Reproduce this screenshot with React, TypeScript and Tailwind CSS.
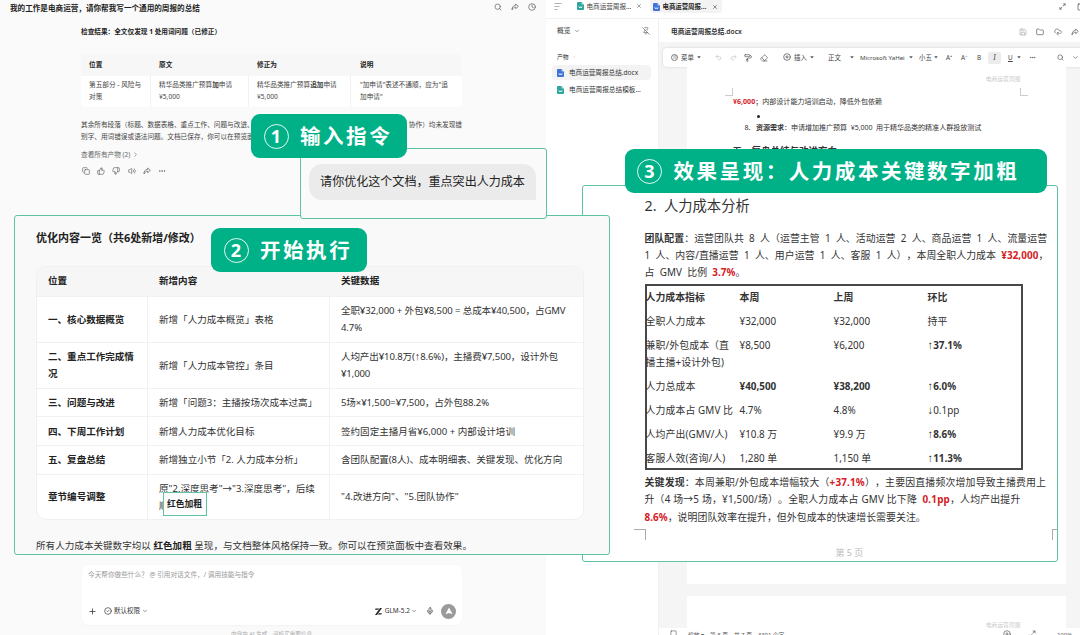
import type { ReactNode } from "react";
import {
  ChevronDown,
  ChevronRight,
  CircleCheck,
  CirclePlus,
  Clock,
  CloudUpload,
  Copy,
  Ellipsis,
  Eraser,
  Folder,
  Maximize2,
  Menu,
  Mic,
  PaintRoller,
  PinOff,
  Plus,
  Redo2,
  Save,
  Search,
  Square,
  ThumbsDown,
  ThumbsUp,
  Undo2,
  Volume2,
  X,
} from "lucide-react";

interface SummaryRow {
  height: string;
  position: string[];
  content: string[];
  data: string[];
  tight?: boolean;
}

const summaryRows: SummaryRow[] = [
  {
    height: "h-[45.5px]",
    position: ["一、核心数据概览"],
    content: ["新增「人力成本概览」表格"],
    data: ["全职¥32,000 + 外包¥8,500 = 总成本¥40,500，占GMV", "4.7%"],
    tight: true,
  },
  {
    height: "h-[46px]",
    position: ["二、重点工作完成情", "况"],
    content: ["新增「人力成本管控」条目"],
    data: ["人均产出¥10.8万(↑8.6%)，主播费¥7,500，设计外包", "¥1,000"],
    tight: true,
  },
  {
    height: "h-[28.5px]",
    position: ["三、问题与改进"],
    content: ["新增「问题3：主播按场次成本过高」"],
    data: ["5场×¥1,500=¥7,500，占外包88.2%"],
    tight: true,
  },
  {
    height: "h-[29px]",
    position: ["四、下周工作计划"],
    content: ["新增人力成本优化目标"],
    data: ["签约固定主播月省¥6,000 + 内部设计培训"],
  },
  {
    height: "h-[28.5px]",
    position: ["五、复盘总结"],
    content: ["新增独立小节「2. 人力成本分析」"],
    data: ["含团队配置(8人)、成本明细表、关键发现、优化方向"],
  },
  {
    height: "h-[45.5px]",
    position: ["章节编号调整"],
    content: ['原"2.深度思考"→"3.深度思考"，后续', "顺延"],
    data: ['"4.改进方向"、"5.团队协作"'],
  },
];

interface CostRow {
  cells: [string, string, string, string];
  second?: string;
  bold?: boolean;
}

const costRows: CostRow[] = [
  { cells: ["全职人力成本", "¥32,000", "¥32,000", "持平"] },
  { cells: ["兼职/外包成本（直", "¥8,500", "¥6,200", "↑37.1%"], second: "播主播+设计外包)" },
  { cells: ["人力总成本", "¥40,500", "¥38,200", "↑6.0%"], bold: true },
  { cells: ["人力成本占 GMV 比", "4.7%", "4.8%", "↓0.1pp"] },
  { cells: ["人均产出(GMV/人)", "¥10.8 万", "¥9.9 万", "↑8.6%"] },
  { cells: ["客服人效(咨询/人)", "1,280 单", "1,150 单", "↑11.3%"] },
];

// Arrows come from a narrower face than the rest of the text
function withArrows(text: string) {
  return text.split(/([↑↓])/).map((part, i) =>
    part === "↑" || part === "↓" ? (
      <span key={i} className="font-['Liberation_Sans',sans-serif] text-[1.15em] leading-none font-bold">
        {part}
      </span>
    ) : (
      part
    ),
  );
}

function Red({ children }: { children: ReactNode }) {
  return <b className="font-bold text-[#d3201f]">{children}</b>;
}

function StepLabel({ num, text, className }: { num: string; text: string; className: string }) {
  return (
    <div className={`absolute flex h-[44px] items-center rounded-[9px] bg-[#00b188] pl-[12.5px] text-white ${className}`}>
      <span className="flex size-[25px] items-center justify-center rounded-full border border-white/90 text-[18px] leading-none font-bold">
        {num}
      </span>
      <span className="ml-[11.5px] text-[20.5px] leading-none font-bold tracking-[2.55px]">{text}</span>
    </div>
  );
}

function FileIcon({ color }: { color: string }) {
  return (
    <svg width="7" height="8" viewBox="0 0 14 16" className="shrink-0">
      <path d="M2 0h7l5 5v9a2 2 0 0 1-2 2H2a2 2 0 0 1-2-2V2a2 2 0 0 1 2-2z" fill={color} />
      <path d="M9 0l5 5h-5z" fill="#fff" opacity="0.6" />
      <path d="M3.5 8.5l2 3.5 1.5-2.5L8.5 12l2-3.5" fill="none" stroke="#fff" strokeWidth="1.5" />
    </svg>
  );
}

function ShareIcon() {
  return (
    <svg width="8" height="8" viewBox="0 0 24 24" fill="none" stroke="currentColor" strokeWidth="2" strokeLinejoin="round">
      <path d="M14 3l8 7-8 7v-4.500c-5 0-8 2.500-11 8.500 0-8 3-13.500 11-14z" />
    </svg>
  );
}

function Caret() {
  return (
    <svg width="4" height="3" viewBox="0 0 8 6" className="shrink-0">
      <path d="M0.5 0.5h7L4 5z" fill="#555" />
    </svg>
  );
}

function ChatPane() {
  return (
    <div className="flex w-[546px] shrink-0 flex-col bg-[#fafafa]">
      <div className="flex h-[16px] shrink-0 items-center justify-between pr-[10px] pl-[10px]">
        <span className="pt-[1px] text-[7.6px] font-bold text-[#222]">我的工作是电商运营，请你帮我写一个通用的周报的总结</span>
        <div className="flex gap-[9px] pb-[2px] text-[#555]">
          <Search size={8} strokeWidth={2} />
          <ShareIcon />
          <Clock size={8} strokeWidth={2} />
        </div>
      </div>

      <div className="ml-[81px] flex w-[381px] flex-col text-[6.65px] text-[#444]">
        <div className="mt-[10px] h-[12px] leading-[12px] font-bold text-[#222]">检查结果：全文仅发现 1 处用词问题（已修正）</div>
        <div className="mt-[16px] grid h-[22px] grid-cols-[69px_98px_102px_110px] items-center rounded-t-[4px] bg-[#f7f7f7] font-bold text-[#222]">
          <span className="pl-[8px]">位置</span>
          <span className="pl-[9px]">原文</span>
          <span className="pl-[9px]">修正为</span>
          <span className="pl-[10px]">说明</span>
        </div>
        <div className="grid h-[31px] grid-cols-[70px_98px_102px_110px] rounded-b-[4px] bg-white leading-[12px]">
          <div className="border-r border-[#f1f1f1] pt-[3px] pl-[8px]">
            第五部分 - 风险与
            <br />
            对策
          </div>
          <div className="border-r border-[#f1f1f1] pt-[3px] pl-[8px] whitespace-nowrap">
            精华品类推广预算<b>加</b>申请
            <br />
            ¥5,000
          </div>
          <div className="border-r border-[#f1f1f1] pt-[3px] pl-[8px] whitespace-nowrap">
            精华品类推广预算<b>追加</b>申请
            <br />
            ¥5,000
          </div>
          <div className="pt-[3px] pl-[9px] whitespace-nowrap">
            "加申请"表述不通顺，应为"追
            <br />
            加申请"
          </div>
        </div>
        <div className="mt-[12px] flex h-[12px] justify-between leading-[12px] whitespace-nowrap">
          <span>其余所有段落（标题、数据表格、重点工作、问题与改进、</span>
          <span>协作）均未发现错</span>
        </div>
        <div className="h-[12px] leading-[12px]">别字、用词错误或语法问题。文档已保存，你可以在预览面</div>
        <div className="mt-[5px] flex h-[13px] items-center gap-[2px] text-[#666]">
          查看所有产物 (2) <ChevronRight size={7} />
        </div>
        <div className="mt-[6px] flex gap-[7.2px] pl-[1px] text-[#555]">
          <Copy size={8} strokeWidth={1.8} />
          <ThumbsUp size={8} strokeWidth={1.8} />
          <ThumbsDown size={8} strokeWidth={1.8} />
          <Volume2 size={8} strokeWidth={1.8} />
          <ShareIcon />
          <Ellipsis size={8} strokeWidth={1.8} />
        </div>
      </div>

      {/* Composer */}
      <div className="mt-auto ml-[82px] flex h-[60px] w-[380px] shrink-0 flex-col rounded-[6px] bg-white px-[6px] shadow-[0_1px_2px_rgba(0,0,0,0.03)]">
        <div className="mt-[4px] h-[11px] text-[6.65px] leading-[11px] text-[#999]">
          今天帮你做些什么？ @ 引用对话文件，/ 调用技能与指令
        </div>
        <div className="mt-auto mb-[6px] flex h-[16px] items-center text-[6.5px] text-[#333]">
          <Plus size={9} strokeWidth={2} />
          <CircleCheck size={8} strokeWidth={2} className="ml-[7px]" />
          <span className="ml-[2px]">默认权限</span>
          <ChevronDown size={6} className="ml-[2px]" />
          <svg width="7" height="7" viewBox="0 0 14 14" className="ml-auto">
            <path d="M1 1h7L6.5 3.5H0zM10 0h4L4 14H0zM7.5 10.5H14L12.5 13H6z" fill="#222" />
          </svg>
          <span className="ml-[3px]">GLM-5.2</span>
          <ChevronDown size={6} className="ml-[1px]" />
          <Mic size={8} strokeWidth={2} className="ml-[9px]" />
          <span className="ml-[7px] flex size-[15px] items-center justify-center rounded-full bg-[#9a9a9a]">
            <svg width="8" height="8" viewBox="0 0 10 10">
              <path d="M5 0.5L9.5 9 5 7.5 0.5 9z" fill="#fff" />
            </svg>
          </span>
        </div>
      </div>
      <div className="h-[10px] shrink-0 overflow-hidden pt-[5px] pl-[231px] text-[5.6px] leading-[8px] text-[#aaa]">
        内容由 AI 生成，请核实重要信息
      </div>
    </div>
  );
}

function FilePane() {
  return (
    <div className="flex w-[113px] shrink-0 flex-col border-r border-[#f0f0f0] text-[#333]">
      <div className="flex h-[24px] items-center justify-between pr-[8px] pl-[11px] text-[6.8px]">
        <span className="flex items-center gap-[3px]">
          概览 <ChevronDown size={6} />
        </span>
        <PinOff size={8} strokeWidth={1.8} className="text-[#555]" />
      </div>
      <div className="mt-[8px] flex h-[12px] items-center gap-[3px] pl-[11px] text-[5.8px]">
        产物 <ChevronDown size={4} className="text-[#aaa]" />
      </div>
      <div className="mt-[2px] ml-[6px] flex h-[15px] w-[99px] items-center gap-[5px] rounded-[4px] bg-[#f3f3f3] pl-[5px] text-[6.6px] whitespace-nowrap">
        <FileIcon color="#3f73d8" />
        电商运营周报总结.docx
      </div>
      <div className="mt-[2px] ml-[6px] flex h-[15px] w-[99px] items-center gap-[5px] pl-[5px] text-[6.65px] whitespace-nowrap">
        <FileIcon color="#2fa5a0" />
        电商运营周报总结模板...
      </div>
    </div>
  );
}

function DocToolbar() {
  return (
    <div className="ml-[4px] flex h-[19px] shrink-0 items-center rounded-l-[4px] bg-white text-[6.4px] whitespace-nowrap text-[#444] shadow-[0_0_3px_rgba(0,0,0,0.14)]">
      <div className="ml-[8px] flex w-[44px] items-center gap-[3px]">
        <span className="flex size-[7px] items-center justify-center rounded-full border border-[#777]">
          <Menu size={4} />
        </span>
        菜单
        <Caret />
      </div>
      <div className="flex w-[68px] items-center gap-[7.5px] text-[#555]">
        <Undo2 size={7} className="text-[#bbb]" />
        <Redo2 size={7} className="text-[#bbb]" />
        <PaintRoller size={8} />
        <Eraser size={8} />
      </div>
      <div className="flex w-[45px] items-center gap-[3px]">
        <CirclePlus size={8} />
        插入
        <Caret />
      </div>
      <div className="flex w-[26px] items-center justify-between">
        正文
        <Caret />
      </div>
      <div className="ml-[6px] flex w-[53px] items-center justify-between">
        <span className="text-[6.1px]">Microsoft YaHei</span>
        <Caret />
      </div>
      <div className="ml-[6px] flex w-[19px] items-center justify-between">
        小五
        <Caret />
      </div>
      <span className="ml-[8px] w-[15px]">A⁺</span>
      <span className="w-[16px]">A⁻</span>
      <span className="w-[11px]">B</span>
      <span className="flex h-[12px] w-[13px] items-center justify-center rounded-[2px] bg-[#ececec] font-serif text-[7.5px] italic">I</span>
      <span className="ml-[7px] w-[9px] underline">U</span>
      <Caret />
      <Ellipsis size={7} className="ml-[8px]" />
      <Search size={7} className="ml-[21px]" />
      <ChevronDown size={7} className="ml-[8px]" />
    </div>
  );
}

function DocPane() {
  return (
    <div className="flex min-w-0 flex-1 flex-col bg-[#f5f5f5]">
      <div className="flex h-[23px] shrink-0 items-center bg-white pt-[2px] pl-[12px] text-[#333]">
        <span className="pt-[1px] text-[6.7px] font-semibold">电商运营周报总结.docx</span>
        <div className="mr-[1px] ml-auto flex gap-[9.3px] text-[#555]">
          <Save size={8} className="text-[#aaa]" />
          <Folder size={8} />
          <CloudUpload size={8} />
          <ShareIcon />
        </div>
      </div>
      <div className="h-[6px] shrink-0" />
      <DocToolbar />

      <div className="ml-[27.5px] flex h-[517px] w-[379px] shrink-0 flex-col bg-white text-[7.05px] text-[#333]">
        <div className="mt-[6px] h-[12px] pr-[45px] text-right text-[5.8px] leading-[12px] text-[#ccc]">电商运营周报</div>
        <div className="mt-[3px] flex h-[8px] justify-between pr-[38px] pl-[38px]">
          <span className="w-[8px] border-r border-b border-[#ccc]" />
          <span className="w-[8px] border-b border-l border-[#ccc]" />
        </div>
        <div className="-mt-[1px] h-[12px] pl-[46.5px] leading-[12px]">
          <Red>¥6,000</Red>；内部设计能力培训启动，降低外包依赖
        </div>
        <div className="mt-[8px] ml-[70px] size-[3px] rounded-full bg-[#222]" />
        <div className="mt-[3px] flex h-[12px] pl-[58px] leading-[12px] whitespace-nowrap">
          <span className="w-[11.5px]">8.</span>
          <span className="tracking-[-0.04px]">
            <b>资源需求</b>：申请增加推广预算&nbsp; ¥5,000&nbsp; 用于精华品类的精准人群投放测试
          </span>
        </div>
        <div className="mt-[11px] pl-[46px] text-[9.5px] leading-[14px] font-bold">五、复盘总结与改进方向</div>
      </div>
      <div className="mt-[12px] ml-[27.5px] h-[32px] w-[379px] shrink-0 overflow-hidden bg-white pt-[23px] pr-[45px] text-right text-[5.8px] leading-[12px] text-[#ccc]">
        电商运营周报
      </div>
      <div className="flex h-[7px] shrink-0 overflow-hidden bg-white pt-[2px] text-[5.8px] leading-[10px] whitespace-nowrap text-[#555]">
        <Square size={7} className="ml-[11px]" />
        <span className="ml-[11px]">缩放 ▾</span>
        <span className="ml-[6px]">第 5 页</span>
        <span className="ml-[6px]">共 7 页</span>
        <span className="ml-[6px]">3391 个字</span>
        <CirclePlus size={8} className="ml-auto" />
        <Maximize2 size={8} className="ml-[17px]" />
        <span className="ml-[10px]">—</span>
        <span className="mr-[8px] ml-[5px]">100%</span>
      </div>
    </div>
  );
}

function InstructionCard() {
  return (
    <div className="absolute top-[147.5px] left-[300px] flex h-[71px] w-[247px] rounded-[3px] border border-[#5dc3a3] bg-[#fafafa] pt-[15px] pl-[8px]">
      <div className="flex h-[36px] w-[227px] items-center justify-center rounded-[13px] rounded-br-[1px] bg-[#ebebeb] pt-[2px] text-[12.06px] whitespace-nowrap text-[#222]">
        请你优化这个文档，重点突出人力成本
      </div>
    </div>
  );
}

function SummaryCard() {
  return (
    <div className="absolute top-[215px] left-[13.5px] h-[339.5px] w-[596px] rounded-[3px] border border-[#5dc3a3] bg-[#f9f9f9] pl-[21.5px] text-[9.55px] text-[#333]">
      <div className="mt-[14px] h-[16px] text-[11px] leading-[16px] font-bold text-[#222]">优化内容一览（共6处新增/修改）</div>
      <div className="mt-[20px] w-[548px] overflow-hidden rounded-[10px] border border-[#f0f0f0] bg-white">
        <div className="grid h-[29px] grid-cols-[111px_182px_1fr] items-center bg-[#f6f6f6] font-bold text-[#222]">
          <span className="pl-[11px]">位置</span>
          <span className="pl-[11px]">新增内容</span>
          <span className="pl-[11px]">关键数据</span>
        </div>
        {summaryRows.map((row) => (
          <div
            key={row.position[0]}
            className={`grid grid-cols-[111px_182px_1fr] border-t border-[#f1f1f1] leading-[17px] whitespace-nowrap ${row.height}`}
          >
            <div className="flex flex-col justify-center border-r border-[#f1f1f1] pl-[11px] font-bold text-[#222]">
              {row.position.map((line) => (
                <span key={line}>{line}</span>
              ))}
            </div>
            <div className="flex flex-col justify-center border-r border-[#f1f1f1] pl-[11px]">
              {row.content.map((line) => (
                <span key={line}>{line}</span>
              ))}
            </div>
            <div className={`flex flex-col justify-center pl-[11px] ${row.tight ? "tracking-[-0.11px]" : ""}`}>
              {row.data.map((line) => (
                <span key={line}>{withArrows(line)}</span>
              ))}
            </div>
          </div>
        ))}
      </div>
      <div className="mt-[17.5px] h-[16px] leading-[16px] tracking-[0.03px] whitespace-nowrap">
        所有人力成本关键数字均以 <b className="text-[#222]">红色加粗</b> 呈现，与文档整体风格保持一致。你可以在预览面板中查看效果。
      </div>
      <div className="absolute top-[276px] left-[148px] flex h-[24px] w-[44px] items-center justify-center border border-[#5dc3a3] bg-[#fdfdfd] pt-[2px] text-[8.8px] font-bold text-[#222]">
        红色加粗
      </div>
    </div>
  );
}

function ResultCard() {
  return (
    <div className="absolute top-[185px] left-[581.5px] h-[377px] w-[476.5px] rounded-[3px] border border-[#5dc3a3] bg-white pl-[62px] text-[9.9px] text-[#333] [text-spacing-trim:space-all]">
      <div className="mt-[9px] h-[22px] text-[14.3px] leading-[22px]">2.&nbsp; 人力成本分析</div>
      <div className="mt-[13px] leading-[17px] tracking-[0.06px] whitespace-nowrap">
        <div>
          <b>团队配置</b>：运营团队共&nbsp; 8&nbsp; 人（运营主管&nbsp; 1&nbsp; 人、活动运营&nbsp; 2&nbsp; 人、商品运营&nbsp; 1&nbsp; 人、流量运营
        </div>
        <div>
          1&nbsp; 人、内容/直播运营&nbsp; 1&nbsp; 人、用户运营&nbsp; 1&nbsp; 人、客服&nbsp; 1&nbsp; 人），本周全职人力成本&nbsp; <Red>¥32,000</Red>，
        </div>
        <div>
          占&nbsp; GMV&nbsp; 比例&nbsp; <Red>3.7%</Red>。
        </div>
      </div>
      <div className="mt-[3px] h-[186px] w-[378px] border-2 border-[#484848] whitespace-nowrap">
        <div className="-ml-px grid h-[23px] grid-cols-[94px_94px_94px_1fr] items-center font-bold">
          <span>人力成本指标</span>
          <span>本周</span>
          <span>上周</span>
          <span>环比</span>
        </div>
        {costRows.map((row) => (
          <div key={row.cells[0]} className="-ml-px grid grid-cols-[94px_94px_94px_1fr] py-[3.5px] leading-[17px]">
            <span className="tracking-[0.1px]">
              {row.cells[0]}
              {row.second && <span className="block">{row.second}</span>}
            </span>
            <span className={row.bold ? "font-bold" : ""}>{row.cells[1]}</span>
            <span className={row.bold ? "font-bold" : ""}>{row.cells[2]}</span>
            <span className={row.cells[3].startsWith("↑") ? "font-bold" : ""}>{withArrows(row.cells[3])}</span>
          </div>
        ))}
      </div>
      <div className="mt-[4px] leading-[17.3px] tracking-[0.19px] whitespace-nowrap">
        <div>
          <b>关键发现</b>：本周兼职/外包成本增幅较大（<Red>+37.1%</Red>），主要因直播频次增加导致主播费用上
        </div>
        <div>
          升（4 场→5 场，¥1,500/场）。全职人力成本占 GMV 比下降 &nbsp;<Red>0.1pp</Red>，人均产出提升
        </div>
        <div className="tracking-[0.05px]">
          <Red>8.6%</Red>，说明团队效率在提升，但外包成本的快速增长需要关注。
        </div>
      </div>
      <div className="mt-[3px] -ml-[11px] flex h-[11px] justify-between">
        <span className="w-[12px] border-t border-r border-[#aaa]" />
        <span className="w-[5px] border-t border-l border-[#aaa]" />
      </div>
      <div className="mt-[5px] pl-[191px] text-[9px] leading-[16px] text-[#bbb]">第 5 页</div>
    </div>
  );
}

export default function App() {
  return (
    <div className="relative flex h-[635px] w-[1080px] overflow-hidden bg-white font-['Noto_Sans','Noto_Sans_CJK_SC',sans-serif]">
      <ChatPane />
      <div className="flex min-w-0 flex-1 flex-col">
        {/* Tabs */}
        <div className="flex h-[19px] shrink-0 items-start border-b border-[#f1f1f1] text-[6.6px] whitespace-nowrap text-[#444]">
          <div className="flex h-[13px] w-full items-center pl-[8px]">
            <svg width="8" height="7" viewBox="0 0 16 14" className="shrink-0" stroke="#999" strokeWidth="1.5">
              <path d="M1 1h14M1 7h10M1 13h6" />
            </svg>
            <span className="ml-[15px] flex w-[73px] items-center gap-[2.5px]">
              <FileIcon color="#2fa5a0" />
              电商运营周报...
              <X size={6} className="ml-[2px]" />
            </span>
            <span className="flex h-[13px] w-[72px] items-center gap-[2.5px] rounded-b-[3px] bg-[#f3f3f3] pl-[3px] text-[6.4px] font-bold text-[#222]">
              <FileIcon color="#3f73d8" />
              电商运营周报...
              <X size={6} className="ml-[3px]" />
            </span>
            <Maximize2 size={7} className="ml-auto" />
            <Square size={8} className="-mr-[5px] ml-[11px] shrink-0" />
          </div>
        </div>
        <div className="flex min-h-0 flex-1">
          <FilePane />
          <DocPane />
        </div>
      </div>

      {/* Callouts over the workspace */}
      <ResultCard />
      <SummaryCard />
      <InstructionCard />
      <StepLabel num="1" text="输入指令" className="top-[114px] left-[251px] w-[156px]" />
      <StepLabel num="2" text="开始执行" className="top-[228px] left-[211px] w-[156px]" />
      <StepLabel num="3" text="效果呈现：人力成本关键数字加粗" className="top-[149px] left-[624.5px] w-[422.5px]" />
    </div>
  );
}
